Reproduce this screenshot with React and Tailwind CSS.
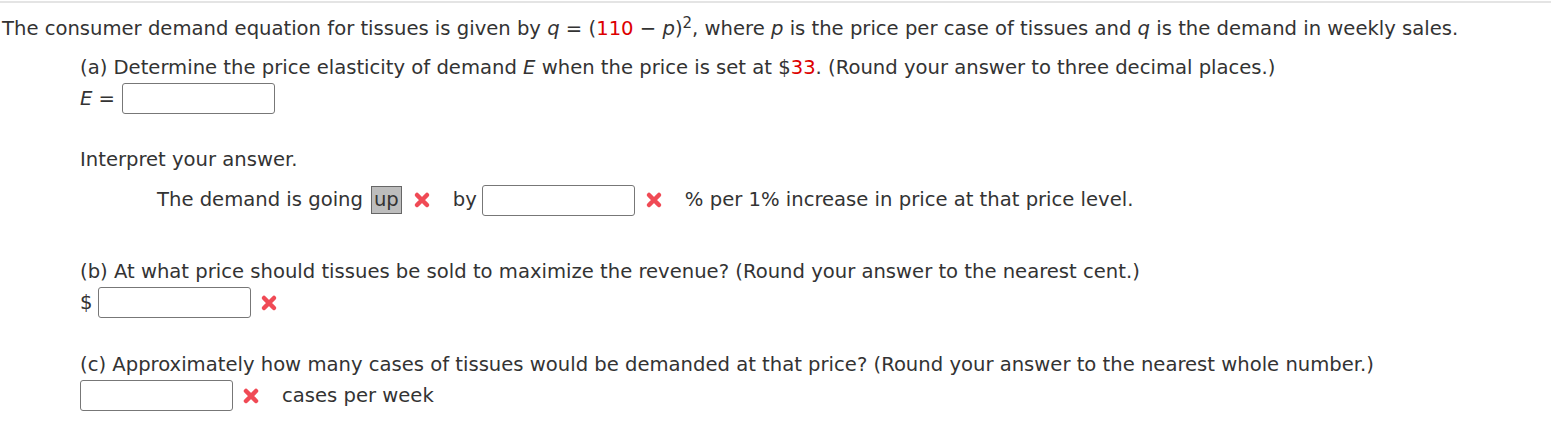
const XMark = () => (
  <svg width="18" height="18" viewBox="0 0 18 18" className="shrink-0">
    <path d="M4 4 L14 14 M14 4 L4 14" stroke="#f04a55" strokeWidth="4.5" strokeLinecap="round" />
  </svg>
);

const Box = ({ className = "" }) => (
  <span className={`inline-block h-[31px] w-[153px] rounded-[3px] border border-[#777] bg-white ${className}`} />
);

export default function App() {
  return (
    <div className="mt-px min-h-screen border-t-2 border-[#e4e4e4] bg-white font-['DejaVu_Sans',Verdana,sans-serif] text-[19.6px] text-[#333]">
      <p className="pl-[2px] pt-[14px] leading-6 whitespace-nowrap">
        The consumer demand equation for tissues is given by <i>q</i> = (
        <span className="text-[#d00]">110</span> − <i>p</i>)
        <sup className="text-[15px]">2</sup>, where <i>p</i> is the price per case of tissues and <i>q</i> is the demand in
        weekly sales.
      </p>

      <div className="pl-[80px]">
        <p className="mt-[15px] leading-6 whitespace-nowrap">
          (a) Determine the price elasticity of demand <i>E</i> when the price is set at $
          <span className="text-[#d00]">33</span>. (Round your answer to three decimal places.)
        </p>
        <div className="mt-[3px] flex h-[31px] items-center">
          <span>
            <i>E</i> =
          </span>
          <Box className="ml-[7px]" />
        </div>

        <p className="mt-[34px] leading-6">Interpret your answer.</p>
        <div className="mt-[12px] flex h-8 items-center pl-[77px] whitespace-nowrap">
          <span>The demand is going</span>
          <span className="ml-[8px] border border-[#666] bg-[#bdbdbd] px-[2px] leading-[26px]">up</span>
          <span className="ml-[11px]">
            <XMark />
          </span>
          <span className="ml-[22px]">by</span>
          <Box className="ml-[5px]" />
          <span className="ml-[10px]">
            <XMark />
          </span>
          <span className="ml-[22px]">% per 1% increase in price at that price level.</span>
        </div>

        <p className="mt-[44px] leading-6 whitespace-nowrap">
          (b) At what price should tissues be sold to maximize the revenue? (Round your answer to the nearest cent.)
        </p>
        <div className="mt-[3px] flex h-[31px] items-center">
          <span>$</span>
          <Box className="ml-[6px]" />
          <span className="ml-[9px]">
            <XMark />
          </span>
        </div>

        <p className="mt-[35px] leading-6 whitespace-nowrap">
          (c) Approximately how many cases of tissues would be demanded at that price? (Round your answer to the nearest
          whole number.)
        </p>
        <div className="mt-[3px] flex h-[31px] items-center">
          <Box />
          <span className="ml-[9px]">
            <XMark />
          </span>
          <span className="ml-[22px]">cases per week</span>
        </div>
      </div>
    </div>
  );
}
